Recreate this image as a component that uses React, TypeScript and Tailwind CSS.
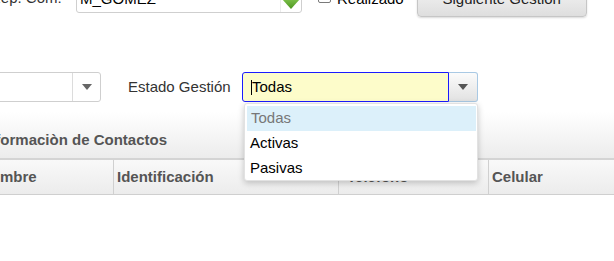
import React from "react";

const Caret = ({ className }: { className: string }) => (
  <svg width="10" height="6" viewBox="0 0 10 6" className={className}>
    <polygon points="0,0 10,0 5,6" fill="currentColor" />
  </svg>
);

const GreenArrow = () => (
  <svg width="18" height="24" viewBox="0 0 18 24">
    <defs>
      <linearGradient id="ga" x1="0" y1="0" x2="0" y2="1">
        <stop offset="0" stopColor="#7cc04a" />
        <stop offset="1" stopColor="#4c961f" />
      </linearGradient>
    </defs>
    <rect x="5" y="0" width="8" height="15" fill="url(#ga)" />
    <polygon points="0,14 18,14 9,24" fill="url(#ga)" />
  </svg>
);

export default function App() {
  return (
    <div className="relative h-[261px] w-[614px] overflow-hidden bg-white font-['Liberation_Sans',Arial,sans-serif] text-[#333]">
      {/* fila superior */}
      <div className="-mt-[20px] flex h-[37px] items-start">
        <span className="-ml-[10px] mt-[9px] w-[72px] whitespace-nowrap text-[15px] leading-[18px] text-[#333]">
          Rep. Com:
        </span>
        <div className="ml-[14px] mt-[3px] flex h-[30px] w-[226px] items-center rounded-[3px] border border-[#cfcfcf] bg-white">
          <span className="flex-1 pl-[3px] pt-[2px] text-[15px] text-black">M_GOMEZ</span>
          <div className="flex h-full w-[21px] items-end justify-center border-l border-[#ececec] pb-[3px]">
            <GreenArrow />
          </div>
        </div>
        <span className="ml-[16px] mt-[10px] h-[13px] w-[13px] rounded-[2px] border border-[#7a7a7a] bg-white" />
        <span className="ml-[6px] mt-[10px] text-[15px] leading-[18px] text-black">Realizado</span>
        <button className="ml-[13px] mt-[1px] h-[36px] w-[170px] rounded-[4px] border border-[#c6c6c6] bg-gradient-to-b from-[#f8f8f8] to-[#dedede] text-[15px] text-[#222] shadow-[0_1px_2px_rgba(0,0,0,0.15)]">
          Siguiente Gestión
        </button>
      </div>

      {/* fila filtros */}
      <div className="mt-[55px] flex h-[30px] items-center">
        <div className="-ml-[20px] flex h-[30px] w-[121px] rounded-[3px] border border-[#cfcfcf] bg-white">
          <div className="flex-1" />
          <div className="flex w-[28px] items-center justify-center border-l border-[#dcdcdc]">
            <Caret className="text-[#666]" />
          </div>
        </div>
        <span className="ml-[27px] w-[114px] text-[15px] text-[#333]">Estado Gestión</span>
        <div className="flex h-[30px]">
          <div className="flex w-[207px] items-center rounded-l-[3px] border border-[#1a1aff] bg-[#fdfcca] pl-[8px]">
            <span className="h-[15px] w-px bg-black" />
            <span className="text-[15px] text-black">Todas</span>
          </div>
          <div className="flex w-[29px] items-center justify-center rounded-r-[3px] border border-l-0 border-[#a9c9e4] bg-gradient-to-b from-[#fbfbfb] to-[#e2e2e2]">
            <Caret className="text-[#555]" />
          </div>
        </div>
      </div>

      {/* panel contactos */}
      <div className="mt-[10px]">
        <div className="h-[48px] border-b-2 border-[#d4d4d4] bg-gradient-to-b from-white to-[#ececec] pt-[19px]">
          <p className="-ml-[18px] text-[15px] font-bold leading-[18px] text-[#555]">
            Informaciòn de Contactos
          </p>
        </div>
        <div className="flex h-[35px] border-b border-[#cfcfcf] bg-gradient-to-b from-[#f9f9f9] to-[#ececec] text-[15px] font-bold text-[#555]">
          <div className="-ml-[25px] flex w-[139px] items-center border-r border-[#d0d0d0] px-[5px]">Nombre</div>
          <div className="flex w-[225px] items-center border-r border-[#d0d0d0] px-[3px]">Identificación</div>
          <div className="flex w-[150px] items-center border-r border-[#d0d0d0] px-[8px]">Teléfono</div>
          <div className="flex flex-1 items-center px-[3px]">Celular</div>
        </div>
      </div>

      {/* lista desplegable */}
      <div className="absolute left-[244px] top-[103px] h-[78px] w-[234px] rounded-[3px] border border-[#e2e2e2] bg-white pt-[2px] shadow-[0_2px_6px_rgba(0,0,0,0.22)]">
        <div className="ml-[2px] mr-[1px] flex h-[25px] items-center bg-[#dcf0fa] pl-[4px] text-[15px] text-[#777]">Todas</div>
        <div className="flex h-[25px] items-center pl-[5px] text-[15px] text-black">Activas</div>
        <div className="flex h-[25px] items-center pl-[5px] text-[15px] text-black">Pasivas</div>
      </div>
    </div>
  );
}
